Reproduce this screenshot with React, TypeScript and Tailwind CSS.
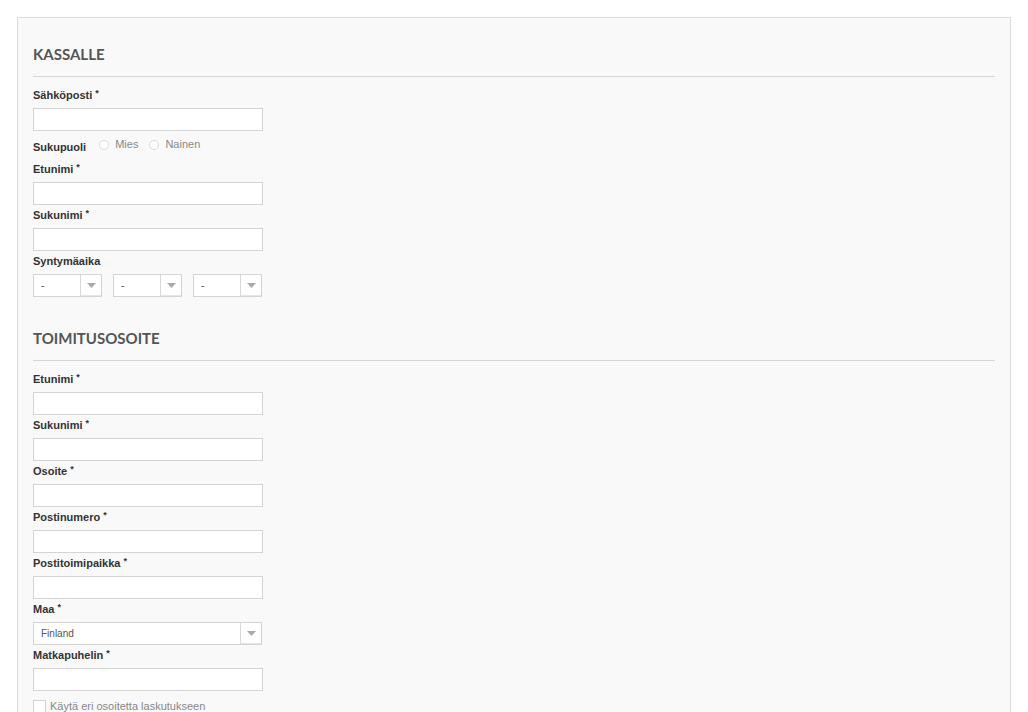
import React from "react";

const labelFont = { fontFamily: '"Liberation Sans", Arial, sans-serif' };

const Req = () => (
  <span className="relative -top-[3px] ml-[3px] text-[9px] font-bold">*</span>
);

const Label = ({ text, required = true }: { text: string; required?: boolean }) => (
  <label className="block h-[14px] text-[11px] leading-[14px] font-bold text-[#333] mb-[6px]">
    {text}
    {required && <Req />}
  </label>
);

const TextInput = () => (
  <input
    type="text"
    className="block w-[230px] h-[23px] bg-white border border-[#d4d4d4] outline-none"
  />
);

const Arrow = () => (
  <span className="flex items-center justify-center w-[21px] h-[21px] border-l border-[#d9d9d9] bg-white shadow-[inset_0_-1px_0_#e6e6e6]">
    <svg width="9" height="5" viewBox="0 0 9 5">
      <path d="M0 0h9L4.5 5z" fill="#aaa" />
    </svg>
  </span>
);

const Select = ({ value, width }: { value: string; width: string }) => (
  <div
    className={`flex items-center justify-between h-[23px] bg-white border border-[#d4d4d4] ${width}`}
  >
    <span className="pl-[7px] text-[10px] text-[#555]">{value}</span>
    <Arrow />
  </div>
);

const Field = ({ label }: { label: string }) => (
  <div className="mb-[3px]">
    <Label text={label} />
    <TextInput />
  </div>
);

const Radio = ({ text }: { text: string }) => (
  <span className="flex items-center gap-[6px] text-[11px] text-[#888]">
    <span className="w-[10px] h-[10px] rounded-full border border-[#d8d8d8] bg-white" />
    {text}
  </span>
);

const Heading = ({ text }: { text: string }) => (
  <div className="border-b border-[#d6d6d6] pb-[12px] mb-[11px]">
    <h2
      className="text-[15px] leading-[20px] font-bold text-[#555]"
      style={{ fontFamily: 'Lato, "Open Sans", sans-serif' }}
    >
      {text}
    </h2>
  </div>
);

export default function App() {
  return (
    <div className="min-h-[712px] bg-white pt-[17px] px-[17px]" style={labelFont}>
      <div className="bg-[#f9f9f9] border border-[#dcdcdc] border-b-0 pt-[26px] px-[15px] pb-[40px]">
        {/* Kassalle */}
        <Heading text="KASSALLE" />
        <Field label="Sähköposti" />

        <div className="flex items-center h-[25px] mb-[3px]">
          <span className="text-[11px] font-bold text-[#333] mr-[13px] pt-[2px]">
            Sukupuoli
          </span>
          <div className="flex items-center gap-[11px] -mt-[4px]">
            <Radio text="Mies" />
            <Radio text="Nainen" />
          </div>
        </div>

        <Field label="Etunimi" />
        <Field label="Sukunimi" />

        <div>
          <Label text="Syntymäaika" required={false} />
          <div className="flex gap-[11px]">
            <Select value="-" width="w-[69px]" />
            <Select value="-" width="w-[69px]" />
            <Select value="-" width="w-[69px]" />
          </div>
        </div>

        {/* Toimitusosoite */}
        <div className="mt-[31px]">
          <Heading text="TOIMITUSOSOITE" />
        </div>
        <Field label="Etunimi" />
        <Field label="Sukunimi" />
        <Field label="Osoite" />
        <Field label="Postinumero" />
        <Field label="Postitoimipaikka" />
        <div className="mb-[3px]">
          <Label text="Maa" />
          <Select value="Finland" width="w-[229px]" />
        </div>
        <Field label="Matkapuhelin" />

        <label className="flex items-center gap-[4px] mt-[7px] text-[11px] text-[#888]">
          <span className="w-[13px] h-[13px] border border-[#d4d4d4] bg-white" />
          Käytä eri osoitetta laskutukseen
        </label>
      </div>
    </div>
  );
}
